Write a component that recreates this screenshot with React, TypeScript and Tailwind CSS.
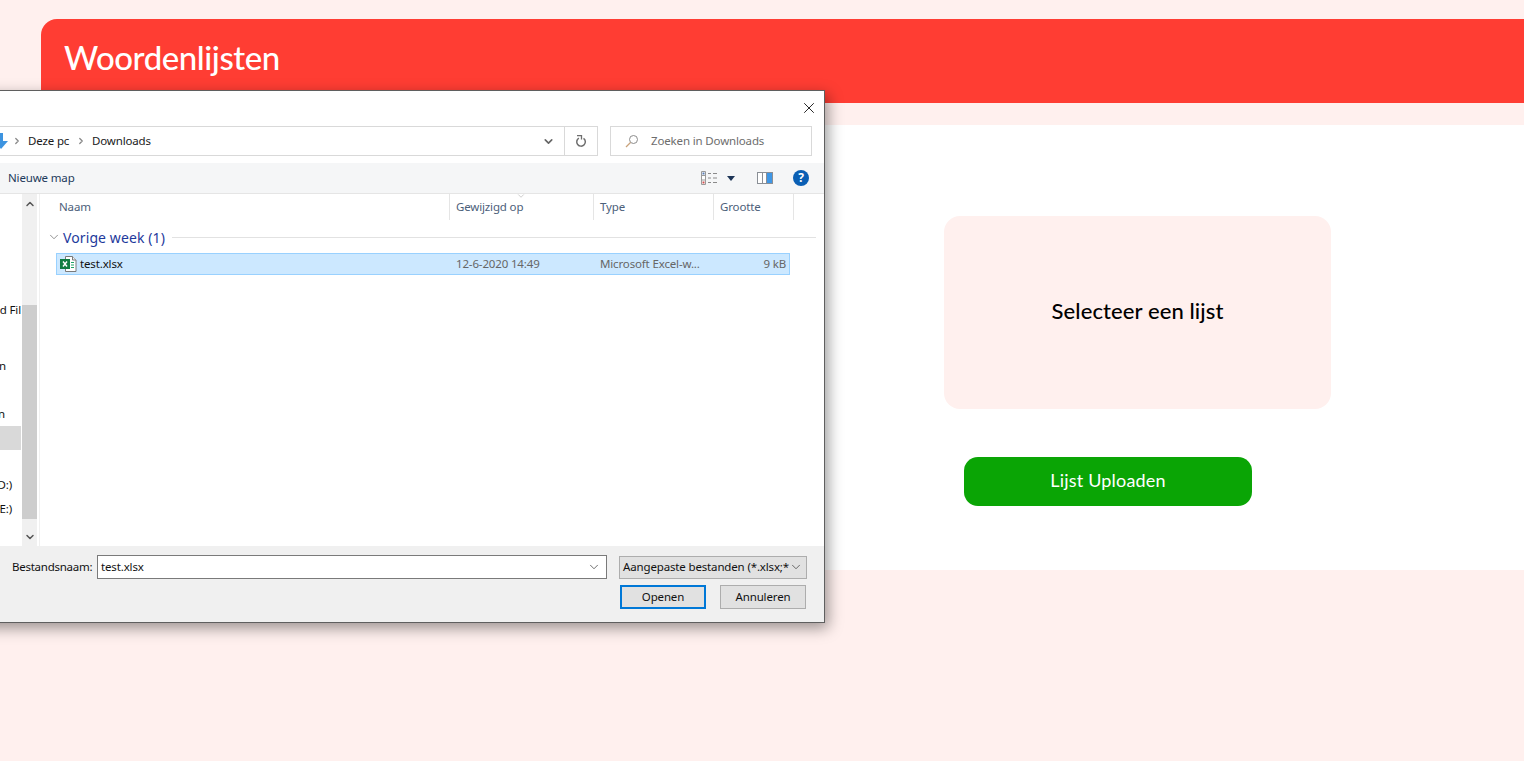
import { ChevronDown, ChevronRight, ChevronUp, X } from 'lucide-react';

const DIALOG_FONT = "font-['Noto_Sans',sans-serif]";

function ExcelIcon() {
  return (
    <svg width="17" height="18" viewBox="0 0 17 18" className="shrink-0">
      <path d="M5.500 1.500h7l3.500 3.500v11.500h-10.500z" fill="#fff" stroke="#7a7a7a" />
      <path d="M12.500 1.500v3.500h3.500" fill="#f0f0f0" stroke="#7a7a7a" />
      <path d="M11 7.500h3M11 10h3M11 12.500h3" stroke="#21a366" />
      <rect x="0" y="4" width="10" height="10" fill="#107c41" />
      <path d="M3 6.500l4 5M7 6.500l-4 5" stroke="#fff" strokeWidth="1.400" />
    </svg>
  );
}

function ViewIcon() {
  return (
    <svg width="17" height="14" viewBox="0 0 17 14">
      <path d="M.5.5h4v13h-4z" fill="#fff" stroke="#9a9a9a" />
      <path d="M1 4.500h3M1 9h3" stroke="#9a9a9a" />
      <rect x="1.500" y="1.500" width="2" height="2" fill="#5a7fb5" />
      <rect x="1.500" y="10.500" width="2" height="2" fill="#d05050" />
      <path d="M7 2.500h3M12 2.500h4M7 7h3M12 7h4M7 11.500h3M12 11.500h4" stroke="#8a8a8a" />
    </svg>
  );
}

function PaneIcon() {
  return (
    <svg width="16" height="12" viewBox="0 0 16 12">
      <rect x=".5" y=".5" width="15" height="11" fill="#fff" stroke="#8a8f96" />
      <rect x="10" y="1" width="5" height="10" fill="#3f97e6" />
      <path d="M5.500 1v10M9.500 1v10" stroke="#8a8f96" />
    </svg>
  );
}

function RefreshIcon() {
  return (
    <svg width="12" height="13" viewBox="0 0 12 13">
      <path d="M8.500 3.300a4.300 4.300 0 1 1-4.600-.2" fill="none" stroke="#6e6e6e" strokeWidth="1.500" />
      <path d="M3 .5h4.500v4" fill="none" stroke="#6e6e6e" strokeWidth="1.300" transform="translate(-1 0)" />
    </svg>
  );
}

function SearchIcon() {
  return (
    <svg width="14" height="14" viewBox="0 0 14 14">
      <circle cx="8.500" cy="5.500" r="4" fill="none" stroke="#8c8c8c" />
      <path d="M5.500 8.500L1 13" stroke="#c9a27a" strokeWidth="1.200" />
    </svg>
  );
}

function FileDialog() {
  return (
    <div className={`absolute left-[-40px] top-[90px] flex h-[533px] w-[865px] flex-col border border-[#5f5f5f] bg-white text-[11.5px] tracking-[-0.15px] shadow-[3px_5px_14px_rgba(0,0,0,0.4)] ${DIALOG_FONT}`}>
      <div className="flex h-[35px] shrink-0 items-center justify-end pb-[2px] pr-[6px]">
        <X size={18} strokeWidth={1.2} color="#111" />
      </div>

      <div className="flex h-[30px] shrink-0 pr-[12px]">
        <div className="flex flex-1 items-center border border-[#d9d9d9] pl-[32px]">
          <svg width="14" height="16" viewBox="0 0 14 16" className="shrink-0">
            <path d="M5 0h4v8h5l-7 8-7-8h5z" fill="#3d94e0" />
          </svg>
          <ChevronRight size={10} strokeWidth={3} color="#888" className="ml-[4px]" />
          <span className="ml-[6px] w-[41px] whitespace-nowrap text-[#1a1a1a]">Deze pc</span>
          <ChevronRight size={10} strokeWidth={3} color="#888" className="ml-[7px]" />
          <span className="ml-[6px] text-[#1a1a1a]">Downloads</span>
          <ChevronDown size={13} strokeWidth={3} color="#666" className="ml-auto mr-[9px]" />
          <div className="flex h-full w-[33px] items-center justify-center border-l border-[#d9d9d9]">
            <RefreshIcon />
          </div>
        </div>
        <div className="ml-[12px] flex w-[202px] items-center border border-[#d9d9d9] pl-[14px] text-[#6d6d6d]">
          <SearchIcon />
          <span className="ml-[12px]">Zoeken in Downloads</span>
        </div>
      </div>

      <div className="mt-[7px] flex h-[31px] shrink-0 items-center border-b border-[#e5e5e5] bg-[#f5f6f7] pl-[47px] pr-[15px] text-[#1d3a5c]">
        <span>Nieuwe map</span>
        <div className="ml-auto flex items-center">
          <ViewIcon />
          <svg width="8" height="5" viewBox="0 0 8 5" className="ml-[9px]">
            <path d="M0 0h8L4 5z" fill="#1d3557" />
          </svg>
          <div className="ml-[22px] flex"><PaneIcon /></div>
          <div className="ml-[20px] flex h-[16px] w-[16px] items-center justify-center rounded-full bg-[#0a5fb4] text-[12px] font-bold text-white">?</div>
        </div>
      </div>

      <div className="flex min-h-0 flex-1">
        <div className="relative w-[60px] shrink-0 overflow-hidden text-[#111]">
          <span className="absolute right-0 top-[107px]">d Fil</span>
          <span className="absolute right-[15px] top-[163px]">n</span>
          <span className="absolute right-[16px] top-[211px]">n</span>
          <div className="absolute left-0 right-0 top-[232px] h-[24px] bg-[#d9d9d9]" />
          <span className="absolute right-[9px] top-[282px]">D:)</span>
          <span className="absolute right-[9px] top-[306px]">E:)</span>
        </div>
        <div className="w-[1px] shrink-0" />
        <div className="flex w-[15px] shrink-0 flex-col items-center bg-[#f0f0f0]">
          <ChevronUp size={12} strokeWidth={3} color="#555" className="mt-[4px]" />
          <div className="mt-[95px] h-[214px] w-full bg-[#cdcdcd]" />
          <ChevronDown size={12} strokeWidth={3} color="#555" className="mt-[12px]" />
        </div>
        <div className="w-[2px] shrink-0" />
        <div className="w-[1px] shrink-0 bg-[#f0f0f0]" />

        <div className="min-w-0 flex-1">
          <div className="flex h-[26px] text-[#4c607a]">
            <div className="w-[409px] pl-[19px] leading-[26px]">Naam</div>
            <div className="relative w-[144px] border-l border-[#e5e5e5] pl-[6px] leading-[26px]">
              Gewijzigd op
              <ChevronDown size={10} strokeWidth={1} color="#888" className="absolute left-[66px] top-[-3px]" />
            </div>
            <div className="w-[120px] border-l border-[#e5e5e5] pl-[6px] leading-[26px]">Type</div>
            <div className="w-[81px] border-x border-[#e5e5e5] pl-[6px] leading-[26px]">Grootte</div>
          </div>

          <div className="ml-[7px] mr-[8px] mt-[7px] flex h-[20px] items-center">
            <ChevronDown size={14} strokeWidth={1.2} color="#666" />
            <span className="ml-[2px] text-[14px] tracking-[0.1px] text-[#1e3a9c]">Vorige week (1)</span>
            <div className="ml-[7px] h-[1px] flex-1 bg-[#e2e2e2]" />
          </div>

          <div className="ml-[16px] mt-[6px] flex h-[22px] w-[734px] items-center border border-[#99d1ff] bg-[#cce8ff]">
            <div className="ml-[3px] flex"><ExcelIcon /></div>
            <span className="ml-[3px] w-[376px] text-[#111]">test.xlsx</span>
            <span className="w-[144px] text-[#666]">12-6-2020 14:49</span>
            <span className="w-[120px] whitespace-nowrap text-[#666]">Microsoft Excel-w...</span>
            <span className="w-[66px] text-right text-[#666]">9 kB</span>
          </div>
        </div>
      </div>

      <div className="flex h-[76px] shrink-0 flex-col bg-[#f0f0f0] pl-[51px] pr-[17px] pt-[9px] text-[#111]">
        <div className="flex h-[24px] items-center">
          <span className="w-[81px] whitespace-nowrap tracking-[-0.25px]">Bestandsnaam:</span>
          <div className="ml-[4px] flex h-[24px] w-[510px] items-center justify-between border border-[#7a7a7a] bg-white pl-[3px] pr-[5px]">
            <span>test.xlsx</span>
            <ChevronDown size={14} strokeWidth={1.2} color="#333" />
          </div>
          <div className="ml-[12px] flex h-[23px] w-[188px] items-center justify-between overflow-hidden whitespace-nowrap border border-[#adadad] bg-[#e1e1e1] pl-[3px] pr-[5px]">
            <span>Aangepaste bestanden (*.xlsx;*</span>
            <ChevronDown size={14} strokeWidth={1.2} color="#333" className="shrink-0" />
          </div>
        </div>
        <div className="mt-[6px] flex justify-end pr-[1px]">
          <div className="flex h-[24px] w-[86px] items-center justify-center border-2 border-[#0078d7] bg-[#e1e1e1]">Openen</div>
          <div className="ml-[14px] flex h-[24px] w-[86px] items-center justify-center border border-[#adadad] bg-[#e1e1e1]">Annuleren</div>
        </div>
      </div>
    </div>
  );
}

export default function App() {
  return (
    <div className="relative h-[761px] w-full overflow-hidden bg-[#fff0ee] pl-[41px] pt-[19px] font-['Lato',sans-serif]">
      <div className="flex h-[84px] items-start rounded-tl-[16px] bg-[#ff3d33] pl-[23px] pt-[16px]">
        <h1 className="text-[33px] font-medium leading-[44px] tracking-[-0.45px] text-white">Woordenlijsten</h1>
      </div>

      <div className="mt-[22px] h-[445px] bg-white pl-[903px] pt-[91px]">
        <div className="flex h-[193px] w-[387px] items-center justify-center rounded-[16px] bg-[#fff0ee] pb-[5px]">
          <span className="text-[22px] font-medium tracking-[0.1px] text-black">Selecteer een lijst</span>
        </div>
        <div className="ml-[20px] mt-[48px] flex h-[49px] w-[288px] items-center justify-center rounded-[14px] bg-[#0aa505] pb-[2px] text-[18px] tracking-[0.2px] text-white">
          Lijst Uploaden
        </div>
      </div>

      <FileDialog />
    </div>
  );
}
